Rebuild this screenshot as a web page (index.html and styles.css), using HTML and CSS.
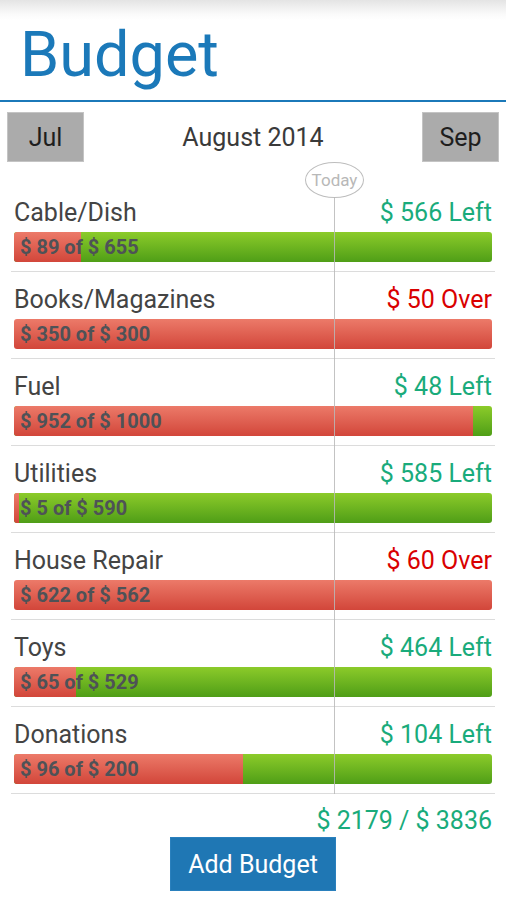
FILE: index.html
```html
<!DOCTYPE html>
<html lang="en">
<head>
    <meta charset="UTF-8">
    <meta name="viewport" content="width=device-width, initial-scale=1.0">
    <title>Budget</title>
    <link rel="stylesheet" href="styles.css">
</head>
<body>
    <header class="top-bar">
        <h1 class="title">Budget</h1>
    </header>

    <nav class="month-nav">
        <button class="month-btn">Jul</button>
        <span class="month-label">August 2014</span>
        <button class="month-btn">Sep</button>
    </nav>

    <section class="budget-list">
        <!-- today marker -->
        <div class="today-badge">Today</div>
        <div class="today-line"></div>

        <div class="budget-row">
            <div class="row-head">
                <span class="row-name">Cable/Dish</span>
                <span class="row-value left">$ 566 Left</span>
            </div>
            <div class="bar">
                <div class="bar-spent" style="width: 14%"></div>
                <span class="bar-label">$ 89 of $ 655</span>
            </div>
        </div>

        <div class="budget-row">
            <div class="row-head">
                <span class="row-name">Books/Magazines</span>
                <span class="row-value over">$ 50 Over</span>
            </div>
            <div class="bar">
                <div class="bar-spent" style="width: 100%"></div>
                <span class="bar-label">$ 350 of $ 300</span>
            </div>
        </div>

        <div class="budget-row">
            <div class="row-head">
                <span class="row-name">Fuel</span>
                <span class="row-value left">$ 48 Left</span>
            </div>
            <div class="bar">
                <div class="bar-spent" style="width: 96%"></div>
                <span class="bar-label">$ 952 of $ 1000</span>
            </div>
        </div>

        <div class="budget-row">
            <div class="row-head">
                <span class="row-name">Utilities</span>
                <span class="row-value left">$ 585 Left</span>
            </div>
            <div class="bar">
                <div class="bar-spent" style="width: 1%"></div>
                <span class="bar-label">$ 5 of $ 590</span>
            </div>
        </div>

        <div class="budget-row">
            <div class="row-head">
                <span class="row-name">House Repair</span>
                <span class="row-value over">$ 60 Over</span>
            </div>
            <div class="bar">
                <div class="bar-spent" style="width: 100%"></div>
                <span class="bar-label">$ 622 of $ 562</span>
            </div>
        </div>

        <div class="budget-row">
            <div class="row-head">
                <span class="row-name">Toys</span>
                <span class="row-value left">$ 464 Left</span>
            </div>
            <div class="bar">
                <div class="bar-spent" style="width: 13%"></div>
                <span class="bar-label">$ 65 of $ 529</span>
            </div>
        </div>

        <div class="budget-row">
            <div class="row-head">
                <span class="row-name">Donations</span>
                <span class="row-value left">$ 104 Left</span>
            </div>
            <div class="bar">
                <div class="bar-spent" style="width: 48%"></div>
                <span class="bar-label">$ 96 of $ 200</span>
            </div>
        </div>
    </section>

    <footer class="summary">
        <div class="summary-total">$ 2179 / $ 3836</div>
        <button class="add-btn">Add Budget</button>
    </footer>
</body>
</html>
```

FILE: styles.css
```css
body {
    margin: 0;
    font-family: Roboto, "Noto Sans", sans-serif;
    background: #fff;
    color: #444;
}
.top-bar {
    height: 100px;
    background: linear-gradient(#e4e4e4, #fafafa 14px, #fff 20px);
    border-bottom: 2px solid #1b79b9;
    box-sizing: content-box;
}
.title {
    margin: 0;
    padding: 17px 0 0 20px;
    font-size: 63px;
    font-weight: normal;
    line-height: 76px;
    color: #1b79b9;
}
.month-nav {
    display: flex;
    align-items: center;
    justify-content: space-between;
    margin: 10px 7px 0;
    height: 50px;
}
.month-btn {
    width: 77px;
    height: 50px;
    background: #ababab;
    border: 1px solid #c4c4c4;
    font-family: inherit;
    font-size: 25px;
    color: #1e1e1e;
    padding: 0;
}
.month-label {
    font-size: 25px;
    color: #3a3a3a;
}
.budget-list {
    position: relative;
    margin: 23px 11px 0;
}
.today-badge {
    position: absolute;
    left: 294px;
    top: -23px;
    width: 57px;
    height: 34px;
    border: 1px solid #bdbdbd;
    border-radius: 50%;
    font-size: 17px;
    line-height: 34px;
    text-align: center;
    color: #b8b8b8;
    background: #fff;
}
.today-line {
    position: absolute;
    left: 323px;
    top: 12px;
    bottom: 0;
    width: 1px;
    background: rgba(185, 185, 185, 0.85);
    z-index: 2;
}
.budget-row {
    padding: 9px 3px;
    border-bottom: 1px solid #dcdcdc;
}
.row-head {
    display: flex;
    justify-content: space-between;
    font-size: 25px;
    line-height: 38px;
}
.row-name {
    color: #444;
}
.row-value.left {
    color: #19ab7b;
}
.row-value.over {
    color: #d90000;
}
.bar {
    display: grid;
    height: 30px;
    border-radius: 3px;
    overflow: hidden;
    background: linear-gradient(#8ccb2a, #4f9e17);
}
.bar-spent,
.bar-label {
    grid-area: 1 / 1;
}
.bar-spent {
    height: 100%;
    background: linear-gradient(#ec7a69, #d2463a);
}
.bar-label {
    padding-left: 6px;
    font-size: 20px;
    font-weight: bold;
    line-height: 30px;
    color: #4e5257;
}
.summary {
    display: flex;
    flex-direction: column;
    align-items: center;
}
.summary-total {
    align-self: flex-end;
    margin: 12px 14px 0 0;
    font-size: 25px;
    line-height: 30px;
    color: #19ab7b;
}
.add-btn {
    margin-top: 1px;
    width: 166px;
    height: 54px;
    background: #1f77b4;
    border: 1px solid #2a80bd;
    color: #fff;
    font-family: inherit;
    font-size: 25px;
    padding: 0;
}
```
